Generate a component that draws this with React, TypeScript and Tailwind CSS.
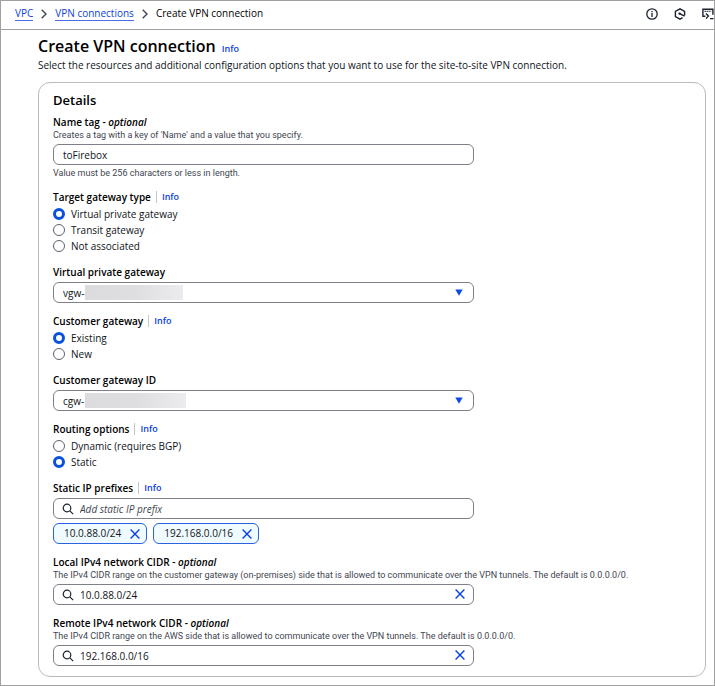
import type { ReactNode } from 'react';
import { useState } from 'react';

const field =
  'block h-[21px] appearance-none rounded-md border border-[#7d8088] bg-white text-[10px] leading-4 text-[#0f141a] outline-none';

function Info() {
  return (
    <a href="#" className="text-[9px] font-semibold text-[#0a3fe0]">
      Info
    </a>
  );
}

function Label({ htmlFor, optional, children }: { htmlFor: string; optional?: boolean; children: ReactNode }) {
  return (
    <label htmlFor={htmlFor} className="block h-[14px] text-[10px] leading-[14px] font-semibold text-black">
      {children}
      {optional && (
        <>
          {' - '}
          <em>optional</em>
        </>
      )}
    </label>
  );
}

function Hint({ children }: { children: ReactNode }) {
  return <p className="font-['Roboto','Open_Sans',sans-serif] text-[9px] leading-3 text-[#424650]">{children}</p>;
}

function WithInfo({ children }: { children: ReactNode }) {
  return (
    <div className="flex h-[14px] items-center gap-[5px] leading-[14px]">
      {children}
      <span className="h-3 w-px bg-[#c6c6cd]" />
      <Info />
    </div>
  );
}

function Radios({ title, name, options, initial }: { title: string; name: string; options: string[]; initial: string }) {
  const [value, setValue] = useState(initial);
  return (
    <div role="radiogroup" aria-label={title}>
      <WithInfo>
        <span className="text-[10px] font-semibold text-black">{title}</span>
      </WithInfo>
      <div className="mt-[2px]">
        {options.map((option) => (
          <label key={option} className="flex h-4 items-center gap-1.5 text-[10px] leading-4">
            <input
              type="radio"
              name={name}
              checked={value === option}
              onChange={() => setValue(option)}
              className="size-3 shrink-0 appearance-none rounded-full border border-[#5c606b] bg-white checked:border-[3px] checked:border-[#0a50e0]"
            />
            {option}
          </label>
        ))}
      </div>
    </div>
  );
}

function Dropdown({ id, title, value, mask }: { id: string; title: string; value: string; mask: string }) {
  return (
    <div>
      <Label htmlFor={id}>{title}</Label>
      <div className="relative mt-[3px] w-[66%]">
        <select id={id} className={`${field} w-full px-[9px]`}>
          <option>{value}</option>
        </select>
        <span className={`absolute top-[3px] left-8 h-[15px] bg-linear-to-r from-[#dcdcde] via-[#dedee0] to-[#ececee] ${mask}`} />
        <svg viewBox="0 0 8 7" className="pointer-events-none absolute top-[7px] right-[11px] h-[7px] w-2" fill="#0a4be0">
          <path d="M0.3 0.5h7.4L4 6.7z" />
        </svg>
      </div>
    </div>
  );
}

function SearchIcon() {
  return (
    <svg
      viewBox="0 0 12 12"
      className="pointer-events-none absolute top-[5px] left-[9px] size-3"
      fill="none"
      stroke="#1b232d"
      strokeWidth="1.2"
    >
      <circle cx="5" cy="5" r="3.8" />
      <path d="M7.8 7.8 11.2 11.2" />
    </svg>
  );
}

function Cross() {
  return (
    <svg viewBox="0 0 10 10" className="size-[10px]" fill="none" stroke="#0a3fe0" strokeWidth="1.4">
      <path d="M0.6 0.6 9.4 9.4M9.4 0.6 0.6 9.4" />
    </svg>
  );
}

function Search({ id, value, placeholder, clearable }: { id: string; value?: string; placeholder?: string; clearable?: boolean }) {
  return (
    <div className="relative mt-[3px] w-[66%]">
      <SearchIcon />
      <input
        id={id}
        type="text"
        defaultValue={value}
        placeholder={placeholder}
        className={`${field} w-full bg-transparent pr-7 pl-[26px] placeholder:text-[#424650] placeholder:italic placeholder:opacity-100`}
      />
      {clearable && (
        <button type="button" aria-label="Clear" className="absolute top-[5px] right-[9px] flex">
          <Cross />
        </button>
      )}
    </div>
  );
}

function Chip({ children }: { children: ReactNode }) {
  return (
    <span className="flex h-[21px] items-center gap-[9px] rounded-md border border-[#2a62e2] bg-[#f0fbff] pr-1.5 pl-[10px] text-[10px]">
      {children}
      <button type="button" aria-label="Remove" className="flex">
        <Cross />
      </button>
    </span>
  );
}

function Separator() {
  return (
    <svg viewBox="0 0 6 10" className="h-[10px] w-1.5" fill="none" stroke="#424650" strokeWidth="1.4">
      <path d="M0.7 0.7 5 5 0.7 9.3" />
    </svg>
  );
}

export default function App() {
  return (
    <div className="min-h-screen border border-[#a0a0a0] bg-white font-['Open_Sans','Noto_Sans',sans-serif] text-[10px] text-[#0f141a]">
      <header className="flex h-[29px] items-center justify-between border-b border-[#a0a0a0] pb-[3px] pl-[14px]">
        <nav aria-label="Breadcrumbs" className="flex items-center gap-2">
          <a href="#" className="border-b border-[#4a6ee8] leading-[13px] text-[#0a3fe0]">
            VPC
          </a>
          <Separator />
          <a href="#" className="border-b border-[#4a6ee8] leading-[13px] text-[#0a3fe0]">
            VPN connections
          </a>
          <Separator />
          <span className="font-medium text-black">Create VPN connection</span>
        </nav>
        <div className="flex items-center gap-4">
          <button type="button" aria-label="Information">
            <svg viewBox="0 0 12 12" className="size-3" fill="none" stroke="#1b232d" strokeWidth="1.3">
              <circle cx="6" cy="6" r="5.2" />
              <path d="M6 5v4M6 3v1.2" />
            </svg>
          </button>
          <button type="button" aria-label="Diagnostics">
            <svg viewBox="0 0 12 12" className="size-3" fill="none" stroke="#1b232d" strokeWidth="1.4">
              <path d="M10.6 7.6V3.4L6 0.9 1.4 3.4v5.2L6 11.1l2.6-1.4" />
              <path d="M5.6 5.6 10.6 8.2" strokeWidth="1.4" />
              <circle cx="5.6" cy="5.6" r="1.2" fill="#1b232d" stroke="none" />
            </svg>
          </button>
          <button type="button" aria-label="CloudShell">
            <svg viewBox="0 0 12 12" className="size-3" fill="none" stroke="#1b232d" strokeWidth="1.4">
              <path d="M3.4 8.3H0.9V1.2h10v5.6" />
              <path d="M2.6 3.4h6.6" strokeDasharray="1.2 0.8" />
              <path d="M4 5.6 6.4 8 4 10.6M8 10.6h3.6" />
            </svg>
          </button>
        </div>
      </header>

      <main className="pr-2 pb-2 pl-[37px]">
        <div className="flex items-baseline gap-1.5 pt-[5px]">
          <h1 className="text-[16px] leading-[22px] font-semibold text-black">Create VPN connection</h1>
          <Info />
        </div>
        <p className="leading-4">
          Select the resources and additional configuration options that you want to use for the site-to-site VPN connection.
        </p>

        <section className="mt-[9px] rounded-xl border border-[#b9bbc2] px-[14px] pt-[7px] pb-[10px]">
          <h2 className="text-[13px] leading-5 font-semibold text-black">Details</h2>

          <div className="mt-[5px] flex flex-col gap-[11px]">
            <div>
              <Label htmlFor="name" optional>
                Name tag
              </Label>
              <Hint>Creates a tag with a key of 'Name' and a value that you specify.</Hint>
              <input id="name" type="text" defaultValue="toFirebox" className={`${field} mt-[3px] mb-[2px] w-[66%] px-[9px]`} />
              <Hint>Value must be 256 characters or less in length.</Hint>
            </div>

            <Radios
              title="Target gateway type"
              name="target"
              options={['Virtual private gateway', 'Transit gateway', 'Not associated']}
              initial="Virtual private gateway"
            />
            <Dropdown id="vgw" title="Virtual private gateway" value="vgw-" mask="w-[98px]" />
            <Radios title="Customer gateway" name="customer" options={['Existing', 'New']} initial="Existing" />
            <Dropdown id="cgw" title="Customer gateway ID" value="cgw-" mask="w-[101px]" />
            <Radios title="Routing options" name="routing" options={['Dynamic (requires BGP)', 'Static']} initial="Static" />

            <div>
              <WithInfo>
                <Label htmlFor="prefixes">Static IP prefixes</Label>
              </WithInfo>
              <Search id="prefixes" placeholder="Add static IP prefix" />
              <div className="mt-1 flex gap-1.5">
                <Chip>10.0.88.0/24</Chip>
                <Chip>192.168.0.0/16</Chip>
              </div>
            </div>

            <div>
              <Label htmlFor="local" optional>
                Local IPv4 network CIDR
              </Label>
              <Hint>
                The IPv4 CIDR range on the customer gateway (on-premises) side that is allowed to communicate over the VPN tunnels. The
                default is 0.0.0.0/0.
              </Hint>
              <Search id="local" value="10.0.88.0/24" clearable />
            </div>

            <div>
              <Label htmlFor="remote" optional>
                Remote IPv4 network CIDR
              </Label>
              <Hint>
                The IPv4 CIDR range on the AWS side that is allowed to communicate over the VPN tunnels. The default is 0.0.0.0/0.
              </Hint>
              <Search id="remote" value="192.168.0.0/16" clearable />
            </div>
          </div>
        </section>
      </main>
    </div>
  );
}
